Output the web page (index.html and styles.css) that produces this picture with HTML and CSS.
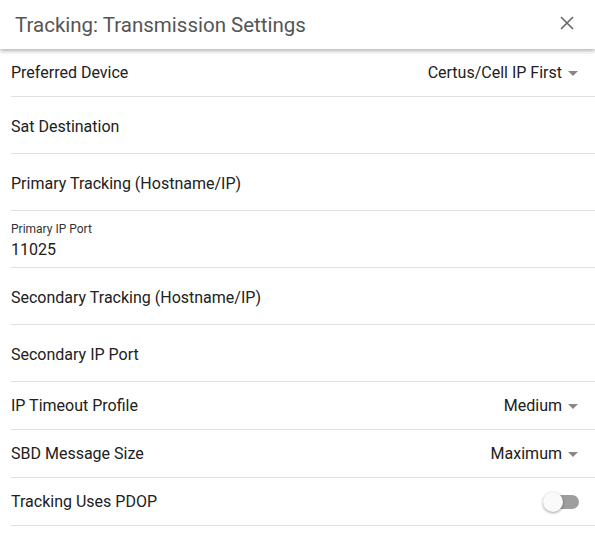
FILE: index.html
```html
<!DOCTYPE html>
<html>
<head>
<meta charset="utf-8">
<link rel="stylesheet" href="styles.css">
</head>
<body>
<div class="dialog">
  <header class="header">
    <div class="title">Tracking: Transmission Settings</div>
    <svg class="close" width="14" height="14" viewBox="0 0 14 14"><path d="M1 1 L13 13 M13 1 L1 13" stroke="#666" stroke-width="1.6" fill="none"/></svg>
  </header>
  <div class="list">
    <div class="row short">
      <span class="label">Preferred Device</span>
      <span class="select">Certus/Cell IP First<span class="arrow"></span></span>
    </div>
    <div class="row tall"><span class="label">Sat Destination</span></div>
    <div class="row tall"><span class="label">Primary Tracking (Hostname/IP)</span></div>
    <div class="row tall field">
      <span class="small">Primary IP Port</span>
      <span class="value">11025</span>
    </div>
    <div class="row tall"><span class="label">Secondary Tracking (Hostname/IP)</span></div>
    <div class="row tall"><span class="label">Secondary IP Port</span></div>
    <div class="row short">
      <span class="label">IP Timeout Profile</span>
      <span class="select">Medium<span class="arrow"></span></span>
    </div>
    <div class="row short">
      <span class="label">SBD Message Size</span>
      <span class="select">Maximum<span class="arrow"></span></span>
    </div>
    <div class="row short">
      <span class="label">Tracking Uses PDOP</span>
      <span class="toggle"><span class="track"></span><span class="thumb"></span></span>
    </div>
  </div>
</div>
</body>
</html>
```
FILE: styles.css
```css
* { box-sizing: border-box; }
html, body { margin: 0; padding: 0; background: #fff; }
body { font-family: Roboto, "Noto Sans", sans-serif; color: #212121; width: 595px; height: 546px; overflow: hidden; }
.dialog { display: flex; flex-direction: column; }
.header {
  height: 49px;
  display: flex;
  align-items: center;
  justify-content: space-between;
  padding: 0 21px 0 15px;
  box-shadow: 0 2px 4px rgba(0,0,0,0.3);
  position: relative;
  z-index: 1;
}
.title { font-size: 20.5px; color: #555; }
.close { display: block; margin-top: -3px; }
.list { margin-left: 11px; }
.row {
  display: flex;
  align-items: center;
  justify-content: space-between;
  border-bottom: 1px solid #e0e0e0;
  padding-right: 17px;
  font-size: 16px;
}
.row.short { height: 48px; }
.row.tall { height: 57px; padding-top: 3px; }
.row.field { flex-direction: column; align-items: flex-start; justify-content: center; padding-top: 2px; }
.small { font-size: 12px; color: #333; line-height: 14px; margin-bottom: 5px; }
.value { font-size: 16px; line-height: 18px; }
.select { display: flex; align-items: center; }
.arrow {
  width: 0; height: 0;
  border-left: 5px solid transparent;
  border-right: 5px solid transparent;
  border-top: 5px solid #888;
  margin-left: 6px;
  margin-top: 1px;
}
.toggle { position: relative; width: 36px; height: 20px; margin-right: -1px; }
.track { position: absolute; left: 2px; top: 3px; width: 34px; height: 14px; border-radius: 7px; background: #9e9e9e; }
.thumb { position: absolute; left: 0; top: 0; width: 20px; height: 20px; border-radius: 50%; background: #fafafa; box-shadow: 0 1px 3px rgba(0,0,0,0.4); }
```
